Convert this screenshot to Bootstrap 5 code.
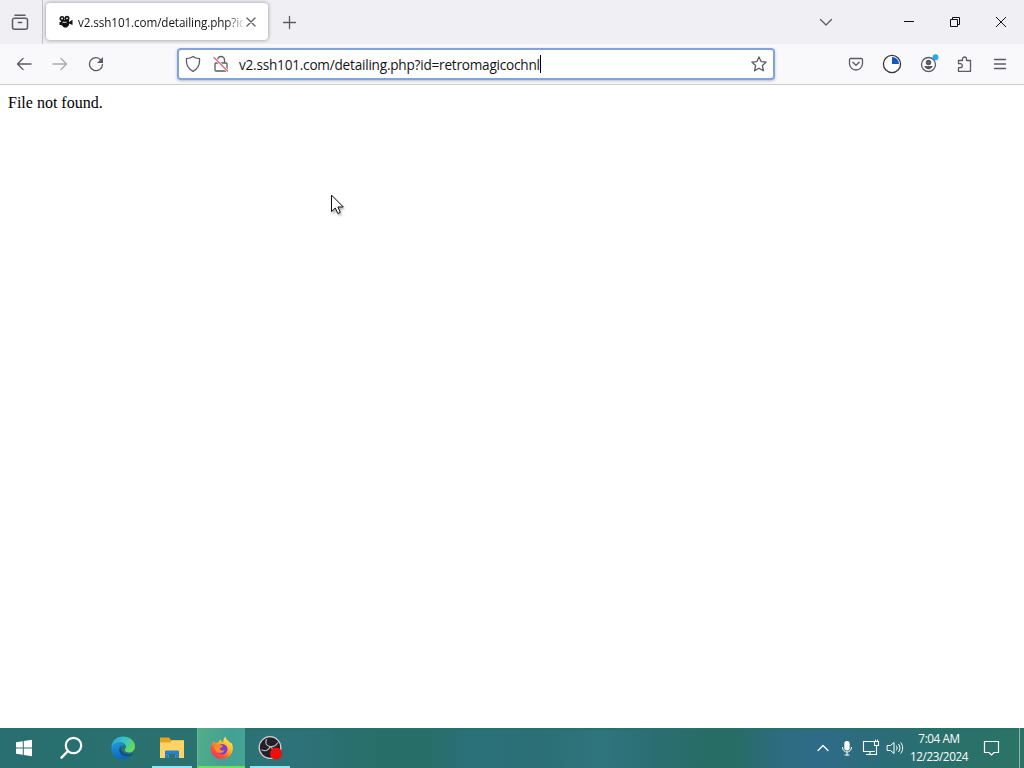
<!DOCTYPE html>
<html lang="en">
<head>
    <meta charset="UTF-8">
    <meta name="viewport" content="width=device-width, initial-scale=1.0">
    <title>v2.ssh101.com/detailing.php</title>
    <link href="https://cdn.jsdelivr.net/npm/bootstrap@5.3.0/dist/css/bootstrap.min.css" rel="stylesheet">
    <style>
        body {
            height: 100vh;
            font-family: "Open Sans", "Noto Sans", sans-serif;
            color: #15141a;
            background-color: #fff;
        }
        svg {
            display: block;
            flex: none;
            fill: none;
            stroke: #5b5b66;
            stroke-width: 1.3;
            stroke-linecap: round;
            stroke-linejoin: round;
        }
        .tab-strip {
            height: 44px;
            background-color: #f0f0f4;
        }
        .view-cell {
            width: 43px;
            padding-right: 2px;
            border-right: 1px solid #c3c3ca;
        }
        .page-tab {
            width: 222px;
            height: 37px;
            margin: 3px 0 4px 3px;
            padding: 0 9px 0 12px;
            border-radius: 4px;
            background-color: #fff;
            box-shadow: 0 0 4px rgba(0, 0, 0, .4);
        }
        .tab-title {
            width: 165px;
            margin-left: 4px;
            padding-top: 2px;
            font-size: 11.7px;
            letter-spacing: -.1px;
            -webkit-mask-image: linear-gradient(to right, #000 148px, transparent 168px);
            mask-image: linear-gradient(to right, #000 148px, transparent 168px);
        }
        .win-btn {
            width: 46px;
        }
        .win-btn svg {
            stroke: #111;
            stroke-width: 1;
            stroke-linecap: butt;
            stroke-linejoin: miter;
        }
        .tool-bar {
            height: 41px;
            padding: 0 6px;
            background-color: #f9f9fb;
            border-bottom: 1px solid #cbcbd0;
        }
        .tool-btn {
            width: 36px;
            height: 40px;
        }
        .tabs-btn {
            margin-right: 26px;
        }
        .tabs-btn svg {
            margin-top: 3px;
        }
        .url-box {
            width: 598px;
            height: 32px;
            margin-left: 63px;
            padding: 0 6px;
            border: 2px solid #7fa5dc;
            border-radius: 4px;
            background-color: #fff;
            box-shadow: 0 1px 3px rgba(0, 0, 0, .25);
        }
        .url-text {
            margin-left: 10px;
            padding-top: 2px;
            font-size: 13.6px;
            line-height: 18px;
            letter-spacing: -.22px;
        }
        .caret {
            width: 1px;
            height: 18px;
            background-color: #000;
        }
        .page-body {
            padding: 9px 8px;
            font-family: "Liberation Serif", serif;
            font-size: 16px;
            line-height: 18px;
            color: #000;
        }
        .pointer {
            position: absolute;
            left: 330px;
            top: 194px;
            filter: drop-shadow(1px 2px 1px rgba(0, 0, 0, .3));
        }
        .task-bar {
            height: 40px;
            background: linear-gradient(to right, #286e70 0%, #2a726f 20%, #2e7279 29%, #286e68 37%, #286e68 42%, #2b717a 46%, #2c7076 53%, #2f757e 59%, #2b6e72 64%, #286c66 69%, #286c66 72%, #2d6c80 76%, #2f6b88 80%, #2b6d79 86%, #29706c 92%, #2b7465 100%);
            color: #fff;
            box-shadow: inset 0 2px 1px #24736b;
        }
        .task-bar svg {
            stroke: #fff;
        }
        .start-btn {
            width: 48px;
        }
        .search-btn {
            width: 50px;
            padding-right: 2px;
        }
        .app-btn {
            width: 49px;
        }
        .app-running::after {
            content: "";
            position: absolute;
            left: 5px;
            right: 4px;
            bottom: 0;
            height: 2px;
            background-color: #8fe6f5;
        }
        .app-active {
            width: 48px;
            margin-left: 1px;
            background: linear-gradient(100deg, #52ae87, #43a094 60%, #45a594);
            border-left: 1px solid #5bbd99;
        }
        .app-active::after {
            left: 0;
            right: 0;
            background-color: #6fe05a;
        }
        .tray-btn {
            width: 24px;
        }
        .tray-clock {
            width: 64px;
            margin-right: 12px;
            padding-bottom: 2px;
            font-size: 11.7px;
            line-height: 18px;
            letter-spacing: -.4px;
        }
        .desktop-edge {
            width: 5px;
            margin-left: 19px;
            border-left: 1px solid #8db5ad;
        }
    </style>
</head>
<body class="d-flex flex-column overflow-hidden">
<!-- Tabs and window buttons -->
<header class="tab-strip d-flex flex-shrink-0">
    <div class="view-cell d-flex align-items-center justify-content-center">
        <svg width="18" height="18" viewBox="0 0 18 18"><path d="M4 2.200h10M3.500 5.200h11a2 2 0 0 1 2 2v7a2 2 0 0 1-2 2h-11a2 2 0 0 1-2-2v-7a2 2 0 0 1 2-2zM7.300 9.500h3.400" stroke-width="1.500"/></svg>
    </div>
    <div class="page-tab d-flex align-items-center">
        <svg width="16" height="16" viewBox="0 0 16 16"><g fill="#111" stroke="none"><circle cx="4" cy="4.500" r="2.500"/><circle cx="9" cy="4.300" r="2.500"/><path d="M3 6h8v2l3.500-2.200V11L11 9.500v1.800L8.800 13.500H6l-2.500-2.500H1.500V8H3z"/></g><g fill="#fff" stroke="none"><circle cx="4" cy="4.500" r=".9"/><circle cx="9" cy="4.300" r=".9"/><path d="M4.500 7.800h4v.9h-4z"/></g></svg>
        <span class="tab-title text-nowrap overflow-hidden">v2.ssh101.com/detailing.php?id</span>
        <svg class="ms-auto" width="16" height="16" viewBox="0 0 16 16"><path d="M4 4l8 8M12 4l-8 8"/></svg>
    </div>
    <div class="d-flex align-items-center ms-2 ps-1">
        <svg width="18" height="18" viewBox="0 0 18 18"><path d="M9.500 3.500v12M3.500 9.500h12"/></svg>
    </div>
    <div class="d-flex ms-auto">
        <div class="tool-btn tabs-btn d-flex align-items-center justify-content-center">
            <svg width="16" height="16" viewBox="0 0 16 16"><path d="M2.500 5.500L8 11l5.500-5.500"/></svg>
        </div>
        <div class="win-btn d-flex align-items-center justify-content-center ms-3">
            <svg width="12" height="12" viewBox="0 0 12 12"><path d="M1 5.500h10"/></svg>
        </div>
        <div class="win-btn d-flex align-items-center justify-content-center">
            <svg width="12" height="12" viewBox="0 0 12 12"><path d="M1.500 3.500h7v7h-7zM3.500 3.500v-2h7v7h-2"/></svg>
        </div>
        <div class="win-btn d-flex align-items-center justify-content-center">
            <svg width="12" height="12" viewBox="0 0 12 12"><path d="M1 1l10 10M11 1L1 11"/></svg>
        </div>
    </div>
</header>

<!-- Navigation and address field -->
<nav class="tool-bar d-flex align-items-center flex-shrink-0">
    <div class="tool-btn d-flex align-items-center justify-content-center">
        <svg width="16" height="16" viewBox="0 0 16 16"><path d="M15 8H1.500M7 2.500L1.500 8 7 13.500"/></svg>
    </div>
    <div class="tool-btn d-flex align-items-center justify-content-center opacity-50">
        <svg width="16" height="16" viewBox="0 0 16 16"><path d="M1 8h13.500M9 2.500L14.500 8 9 13.500"/></svg>
    </div>
    <div class="tool-btn d-flex align-items-center justify-content-center">
        <svg width="16" height="16" viewBox="0 0 16 16"><path d="M13 4A6.500 6.500 0 1 0 14.500 8.500"/><path d="M15 1v6H9z" fill="#5b5b66" stroke="none"/></svg>
    </div>
    <div class="url-box d-flex align-items-center">
        <svg width="16" height="18" viewBox="0 0 16 18"><path d="M8 1.500c2 1.500 4 2 6.500 2.200C15 9 12.500 14 8 16.300 3.500 14 1 9 1.500 3.700 4 3.500 6 3 8 1.500z"/></svg>
        <svg class="ms-2 ps-1" width="20" height="18" viewBox="0 0 16 18"><path d="M4.500 8V5a3.500 3.500 0 0 1 7 0v3M3 8h10a1 1 0 0 1 1 1v6a1 1 0 0 1-1 1H3a1 1 0 0 1-1-1V9a1 1 0 0 1 1-1z"/><path d="M1 2.500l13.500 13.500" stroke="#fff" stroke-width="2.500"/><path d="M1 2.500l13.500 13.500" stroke="#e0607a"/></svg>
        <span class="url-text text-nowrap">v2.ssh101.com/detailing.php?id=retromagicochnl</span>
        <span class="caret"></span>
        <svg class="ms-auto" width="16" height="16" viewBox="0 0 16 16"><path d="M8 .9l2.100 4.700 5.100.5-3.800 3.500 1.100 5.200L8 12.200l-4.500 2.600 1.100-5.200L.8 6.100l5.100-.5z"/></svg>
    </div>
    <div class="d-flex ms-auto">
        <div class="tool-btn d-flex align-items-center justify-content-center">
            <svg width="16" height="16" viewBox="0 0 16 16"><path d="M2.800 2.500h10.400c.8 0 1.300.5 1.300 1.300V7.500a6.500 6.500 0 0 1-13 0V3.800c0-.8.500-1.300 1.300-1.300zM4.800 6.300L8 9.300l3.200-3"/></svg>
        </div>
        <div class="tool-btn d-flex align-items-center justify-content-center">
            <svg width="20" height="20" viewBox="0 0 20 20"><circle cx="10" cy="10" r="8.600" fill="#fff" stroke="#38383f"/><path d="M10 10V3a7 7 0 0 1 7 7z" fill="#1455c8" stroke="none"/></svg>
        </div>
        <div class="tool-btn d-flex align-items-center justify-content-center">
            <svg width="22" height="20" viewBox="0 0 22 20"><circle cx="11.500" cy="10.500" r="7"/><circle cx="11.500" cy="8.500" r="2.700" fill="#5b5b66" stroke="none"/><path d="M7.300 12h8.400c-.5 2-2 3.200-4.200 3.200s-3.700-1.200-4.200-3.200z" fill="#5b5b66" stroke="none"/><circle cx="18.500" cy="3.300" r="3" fill="#2ba9e8" stroke="none"/></svg>
        </div>
        <div class="tool-btn d-flex align-items-center justify-content-center">
            <svg width="16" height="16" viewBox="0 0 16 16"><path d="M2.500 4.500h4V3a2 2 0 0 1 4 0v1.500h4v11h-12v-3.800h1.800a2 2 0 0 0 0-4H2.500z"/></svg>
        </div>
        <div class="tool-btn d-flex align-items-center justify-content-center">
            <svg width="16" height="16" viewBox="0 0 16 16"><path d="M2.500 3.500h11M2.500 8h11M2.500 12.500h11"/></svg>
        </div>
    </div>
</nav>

<main class="page-body flex-grow-1">File not found.</main>

<svg class="pointer" width="16" height="22" viewBox="0 0 16 22"><path d="M1.500 1.500v16l3.800-3.500 2.500 5.500 2.500-1.200-2.400-5.300h5z" fill="#fff" stroke="#111" stroke-width="1" stroke-linejoin="miter"/></svg>

<!-- Taskbar -->
<footer class="task-bar d-flex flex-shrink-0">
    <div class="start-btn d-flex align-items-center justify-content-center">
        <svg width="18" height="18" viewBox="0 0 18 18"><path d="M1 3.200l6.800-1v6.300H1zM8.800 2L17 .8v7.700H8.800zM1 9.500h6.800v6.300L1 14.800zM8.800 9.500H17v7.700L8.800 16z" fill="#fff" stroke="none"/></svg>
    </div>
    <div class="search-btn d-flex align-items-center justify-content-center">
        <svg width="24" height="24" viewBox="0 0 24 24"><circle cx="13.500" cy="9.500" r="7.700" stroke-width="2.200"/><path d="M8 15L1.500 21.700" stroke-width="2.400"/></svg>
    </div>
    <div class="app-btn d-flex align-items-center justify-content-center">
        <svg width="24" height="24" viewBox="0 0 24 24">
            <defs>
                <linearGradient id="edgeTop" x1="0" y1="0" x2="1" y2=".5"><stop offset="0" stop-color="#279fe0"/><stop offset=".5" stop-color="#36bfcf"/><stop offset="1" stop-color="#68d95c"/></linearGradient>
                <linearGradient id="edgeLow" x1="0" y1="0" x2=".4" y2="1"><stop offset="0" stop-color="#209be0"/><stop offset="1" stop-color="#0b66bd"/></linearGradient>
            </defs>
            <g stroke="none">
                <path d="M.3 11C1 4.500 6 .5 12 .5c7 0 12 4.500 12 10 0 4-3 6-6 6-2.500 0-4.500-1-4.500-2.500 0-1 1.500-1.300 1.500-3C15 8.500 12.500 6.500 9 6.500c-4 0-7 2-8.700 4.500z" fill="url(#edgeTop)"/>
                <path d="M.3 12C1.500 8.500 4.500 6.500 8.500 6.500c3 0 5.500 1.500 6.200 3.500-4-2-6.700 1-6.700 4 0 4 3.500 8 10.500 6.500C16.500 23 14 23.700 12 23.700 5.500 23.700 0 18.500.3 12z" fill="url(#edgeLow)"/>
                <path d="M9.500 10.500C6.500 15 10 21.500 18.500 20.500c1.500-.5 3-2 3.700-3.500-5 2.500-12.500 1-12.700-6.500z" fill="#114f95"/>
            </g>
        </svg>
    </div>
    <div class="app-btn app-running position-relative d-flex align-items-center justify-content-center">
        <svg width="26" height="24" viewBox="0 0 26 24"><g stroke="none"><path d="M1 1.500h9l2 2.500h13v18H1z" fill="#e5a51e"/><path d="M1 6.500h10l2-2h12V22H1z" fill="#ffd466"/><path d="M6 22v-6.500a1 1 0 0 1 1-1h12a1 1 0 0 1 1 1V22h-3.500v-3h-7v3z" fill="#267fc9"/><path d="M9.500 18h7v4h-7z" fill="#286f80"/></g></svg>
    </div>
    <div class="app-btn app-running app-active position-relative d-flex align-items-center justify-content-center">
        <svg width="24" height="24" viewBox="0 0 24 24">
            <defs>
                <linearGradient id="foxBody" x1=".9" y1=".1" x2=".2" y2="1"><stop offset="0" stop-color="#fff04a"/><stop offset=".4" stop-color="#ffad2c"/><stop offset=".7" stop-color="#ff5839"/><stop offset="1" stop-color="#ee2865"/></linearGradient>
            </defs>
            <g stroke="none">
                <path d="M3.300 5l2 2.300L8 6.500c1-2 2-2.500 3-3 0 1.500 1 2.500 2 3 .3-3 1-4.500 2.500-6 .3 3 3 4 5 6.500 1-.2 1.300.3 1.500 1 3 7-2 15-10 15C5 23 .5 17.500.8 12.500 1 9 2.500 7.500 3.300 5z" fill="url(#foxBody)"/>
                <circle cx="12.300" cy="13.200" r="5.200" fill="#7a40cf"/>
                <path d="M5 8.500c2-.8 3.500-.3 4.500.7 2-.5 3 .3 3.500 1.300-1 1-2.700 1-3.200 2.200.5 1.800 2.700 2.300 4.700 1.300-.8 3-5 4-8 1.500C4.500 13.500 4 11 5 8.500z" fill="#ff8a2b"/>
            </g>
        </svg>
    </div>
    <div class="app-btn app-running position-relative d-flex align-items-center justify-content-center">
        <svg width="26" height="26" viewBox="0 0 26 26"><circle cx="13" cy="12.500" r="10.800" fill="#241f27" stroke="#d0d0d3"/><g stroke="#b9b9be" stroke-width="1.200"><path d="M9.500 4.500c-1.500 3.500-.5 6.500 3.500 7 3.500.5 6-1 7.500-3.500M5 15c3.500 1.500 7 .5 8-3.500M13 11.500c3 1.500 4 5 2 9"/></g><circle cx="19" cy="18.500" r="6" fill="#f40b0b" stroke="none"/></svg>
    </div>

    <!-- Tray -->
    <div class="d-flex align-items-center ms-auto">
        <div class="tray-btn d-flex justify-content-center">
            <svg width="14" height="14" viewBox="0 0 14 14"><path d="M2 9.500l5-5 5 5"/></svg>
        </div>
        <div class="tray-btn d-flex justify-content-center">
            <svg width="14" height="16" viewBox="0 0 14 16"><rect x="4.300" y="1" width="5.400" height="9.500" rx="2.700" fill="#fff" stroke="none"/><path d="M2.500 7.500a4.500 4.500 0 0 0 9 0M7 12v3M5 15h4" stroke-width="1"/></svg>
        </div>
        <div class="tray-btn d-flex justify-content-center">
            <svg width="18" height="18" viewBox="0 0 18 18"><path d="M11.500 2.500h-10v10h11M8 12.500v3M4.500 15.500h8M12.500 2.500h4v4h-4zM14.500 6.500v9h-2M13.500 1v1.500M15.500 1v1.500" stroke-width="1.100" stroke-linejoin="miter"/></svg>
        </div>
        <div class="tray-btn d-flex justify-content-center">
            <svg width="18" height="16" viewBox="0 0 18 16"><path d="M1.500 5.500h3L8 2.500v11l-3.500-3h-3zM10.500 6c.8 1.200.8 2.800 0 4M12.700 4.300c1.700 2.300 1.700 5.100 0 7.400M14.900 2.700c2.400 3.300 2.400 7.300 0 10.600" stroke-width="1"/></svg>
        </div>
        <div class="tray-clock text-center text-nowrap">7:04 AM<br>12/23/2024</div>
        <svg width="17" height="18" viewBox="0 0 17 18"><path d="M1.500 2.500h14v11H11l-2.500 2.500L6 13.500H1.500z" stroke-width="1.200" stroke-linejoin="miter"/></svg>
        <div class="desktop-edge align-self-stretch"></div>
    </div>
</footer>
<script src="https://cdn.jsdelivr.net/npm/bootstrap@5.3.0/dist/js/bootstrap.bundle.min.js"></script>
</body>
</html>
